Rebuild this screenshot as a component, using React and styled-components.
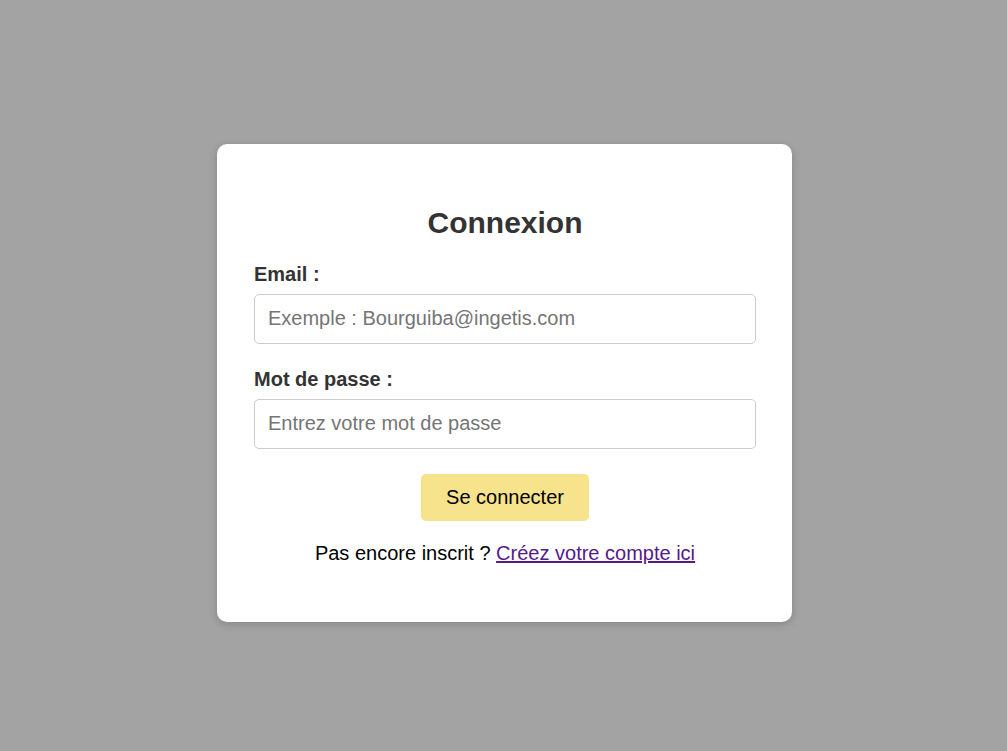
import React from "react";
import styled, { createGlobalStyle } from "styled-components";

const Global = createGlobalStyle`
  html, body { margin: 0; padding: 0; }
  body {
    background: #a3a3a3;
    font-family: "Liberation Sans", Arial, sans-serif;
  }
`;

const Page = styled.div`
  box-sizing: border-box;
  min-height: 751px;
  padding: 14px 0 0 2px;
  display: flex;
  align-items: center;
  justify-content: center;
`;

const Card = styled.form`
  box-sizing: border-box;
  width: 575px;
  height: 478px;
  background: #fff;
  border-radius: 10px;
  box-shadow: 0 2px 8px rgba(0, 0, 0, 0.18);
  padding: 62px 36px 40px 37px;
  display: flex;
  flex-direction: column;
`;

const Title = styled.h2`
  margin: 0 0 23px;
  text-align: center;
  font-size: 30px;
  font-weight: bold;
  color: #333;
  line-height: 34px;
`;

const Field = styled.div`
  display: flex;
  flex-direction: column;
  gap: 8px;
  margin-bottom: ${(p) => p.$mb}px;
`;

const Label = styled.label`
  font-size: 20px;
  font-weight: bold;
  color: #333;
  line-height: 23px;
`;

const Input = styled.input`
  box-sizing: border-box;
  width: 100%;
  height: 50px;
  border: 1px solid #ccc;
  border-radius: 5px;
  padding: 0 13px;
  font-family: "Liberation Sans", Arial, sans-serif;
  font-size: 20px;
  color: #333;
  outline: none;
  &::placeholder { color: #757575; }
`;

const Button = styled.button`
  align-self: center;
  width: 168px;
  height: 47px;
  border: none;
  border-radius: 5px;
  background: #f7e38b;
  color: #000;
  font-family: "Liberation Sans", Arial, sans-serif;
  font-size: 20px;
  cursor: pointer;
  margin-bottom: 21px;
`;

const Footer = styled.p`
  margin: 0;
  text-align: center;
  font-size: 20px;
  line-height: 23px;
  color: #000;
`;

const Link = styled.a`
  color: #551a8b;
  text-decoration: underline;
`;

export default function App() {
  return (
    <>
      <Global />
      <Page>
        <Card onSubmit={(e) => e.preventDefault()}>
          <Title>Connexion</Title>
          <Field $mb={24}>
            <Label htmlFor="email">Email :</Label>
            <Input id="email" type="email" placeholder="Exemple : Bourguiba@ingetis.com" />
          </Field>
          <Field $mb={25}>
            <Label htmlFor="pwd">Mot de passe :</Label>
            <Input id="pwd" type="password" placeholder="Entrez votre mot de passe" />
          </Field>
          <Button type="submit">Se connecter</Button>
          <Footer>
            Pas encore inscrit ? <Link href="#">Créez votre compte ici</Link>
          </Footer>
        </Card>
      </Page>
    </>
  );
}
